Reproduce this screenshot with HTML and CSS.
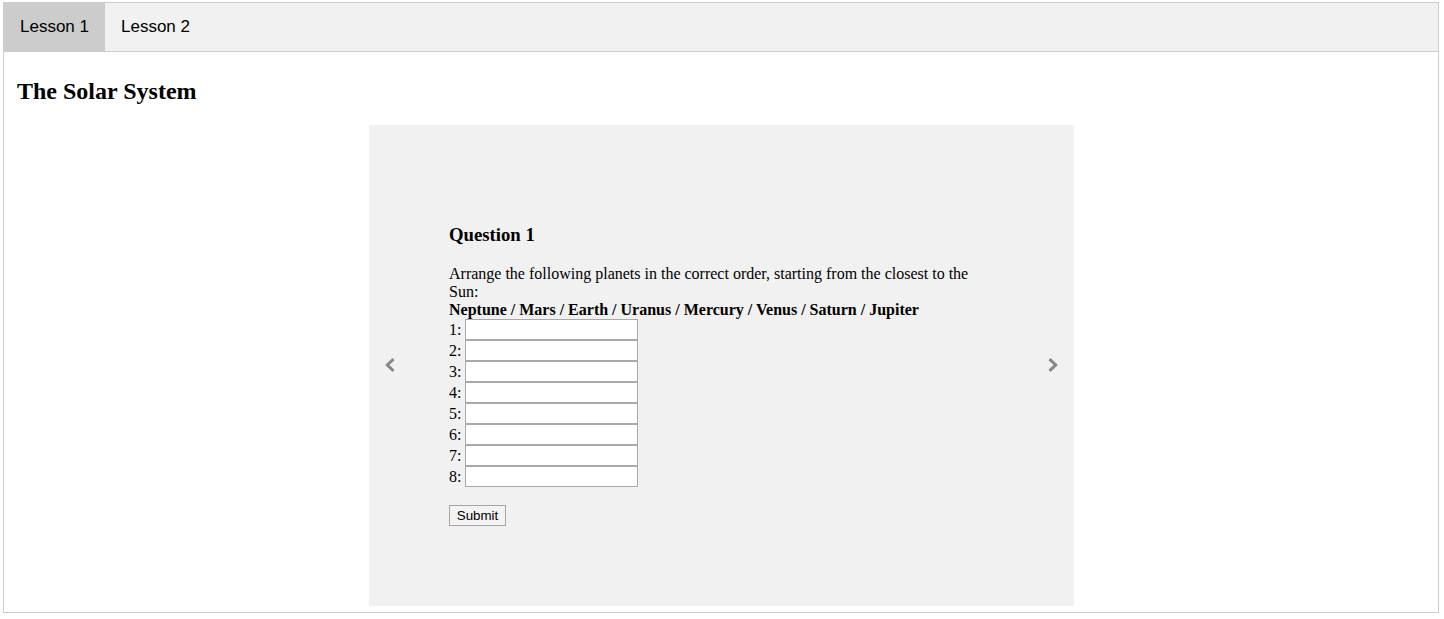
FILE: index.html
```html
<!DOCTYPE html>
<html>
<head>
<meta charset="utf-8">
<title>The Solar System</title>
<link rel="stylesheet" href="styles.css">
</head>
<body>
<div class="wrap">
  <div class="tab">
    <button class="tablink active">Lesson 1</button>
    <button class="tablink">Lesson 2</button>
  </div>
  <div class="tabcontent">
    <h2 class="title">The Solar System</h2>
    <div class="slideshow">
      <a class="nav prev" aria-label="Previous">
        <svg width="10" height="14" viewBox="0 0 10 14"><polyline points="8.5,1.2 2.3,7 8.5,12.8" fill="none" stroke="#888" stroke-width="3"/></svg>
      </a>
      <div class="slide">
        <h3 class="qtitle">Question 1</h3>
        <p class="qtext">Arrange the following planets in the correct order, starting from the closest to the Sun:<br><b>Neptune / Mars / Earth / Uranus / Mercury / Venus / Saturn / Jupiter</b></p>
        <div class="answers">
          <div class="row">1: <input class="field" type="text"></div>
          <div class="row">2: <input class="field" type="text"></div>
          <div class="row">3: <input class="field" type="text"></div>
          <div class="row">4: <input class="field" type="text"></div>
          <div class="row">5: <input class="field" type="text"></div>
          <div class="row">6: <input class="field" type="text"></div>
          <div class="row">7: <input class="field" type="text"></div>
          <div class="row">8: <input class="field" type="text"></div>
        </div>
        <div class="actions"><button class="submit">Submit</button></div>
      </div>
      <a class="nav next" aria-label="Next">
        <svg width="10" height="14" viewBox="0 0 10 14"><polyline points="1.5,1.2 7.7,7 1.5,12.8" fill="none" stroke="#888" stroke-width="3"/></svg>
      </a>
    </div>
  </div>
</div>
</body>
</html>
```
FILE: styles.css
```css
html, body {
  margin: 0;
  padding: 0;
  background: #fff;
}
body {
  font-family: "Liberation Serif", "Times New Roman", serif;
  font-size: 16px;
  color: #000;
}
.wrap {
  margin: 2px 5px 0 3px;
}
.tab {
  display: flex;
  border: 1px solid #ccc;
  background: #f1f1f1;
}
.tablink {
  border: none;
  outline: none;
  margin: 0;
  background: transparent;
  padding: 14px 16px;
  font-family: "Liberation Sans", Arial, sans-serif;
  font-size: 17px;
  line-height: 20px;
  color: #000;
  cursor: pointer;
}
.tablink.active {
  background: #ccc;
}
.tabcontent {
  border: 1px solid #ccc;
  border-top: none;
  padding: 6px 12px 6px 13px;
}
.title {
  font-size: 24px;
  font-weight: bold;
  margin: 19.92px 0;
}
.slideshow {
  position: relative;
  width: 705px;
  height: 481px;
  margin: 0 auto;
  background: #f1f1f1;
  display: flex;
  align-items: center;
}
.slide {
  padding: 0 80px;
  flex: 1;
}
.qtitle {
  font-size: 18.72px;
  font-weight: bold;
  margin: 18.72px 0;
}
.qtext {
  margin: 0;
}
.row {
  height: 21px;
  line-height: 21px;
  white-space: nowrap;
}
.field {
  box-sizing: border-box;
  width: 173px;
  height: 21px;
  margin: 0;
  padding: 1px 2px;
  border: 1px solid #a9a9a9;
  background: #fff;
  vertical-align: top;
  font-family: "Liberation Sans", Arial, sans-serif;
  font-size: 13.33px;
}
.actions {
  margin-top: 18px;
  height: 21px;
}
.submit {
  box-sizing: border-box;
  width: 57px;
  height: 21px;
  margin: 0;
  padding: 0;
  border: 1px solid #a5a5a5;
  background: #f3f3f3;
  font-family: "Liberation Sans", Arial, sans-serif;
  font-size: 13.33px;
  color: #000;
  vertical-align: top;
}
.nav {
  position: absolute;
  top: 50%;
  margin-top: -7px;
  line-height: 0;
  cursor: pointer;
}
.prev {
  left: 16px;
}
.next {
  right: 16px;
}
```
